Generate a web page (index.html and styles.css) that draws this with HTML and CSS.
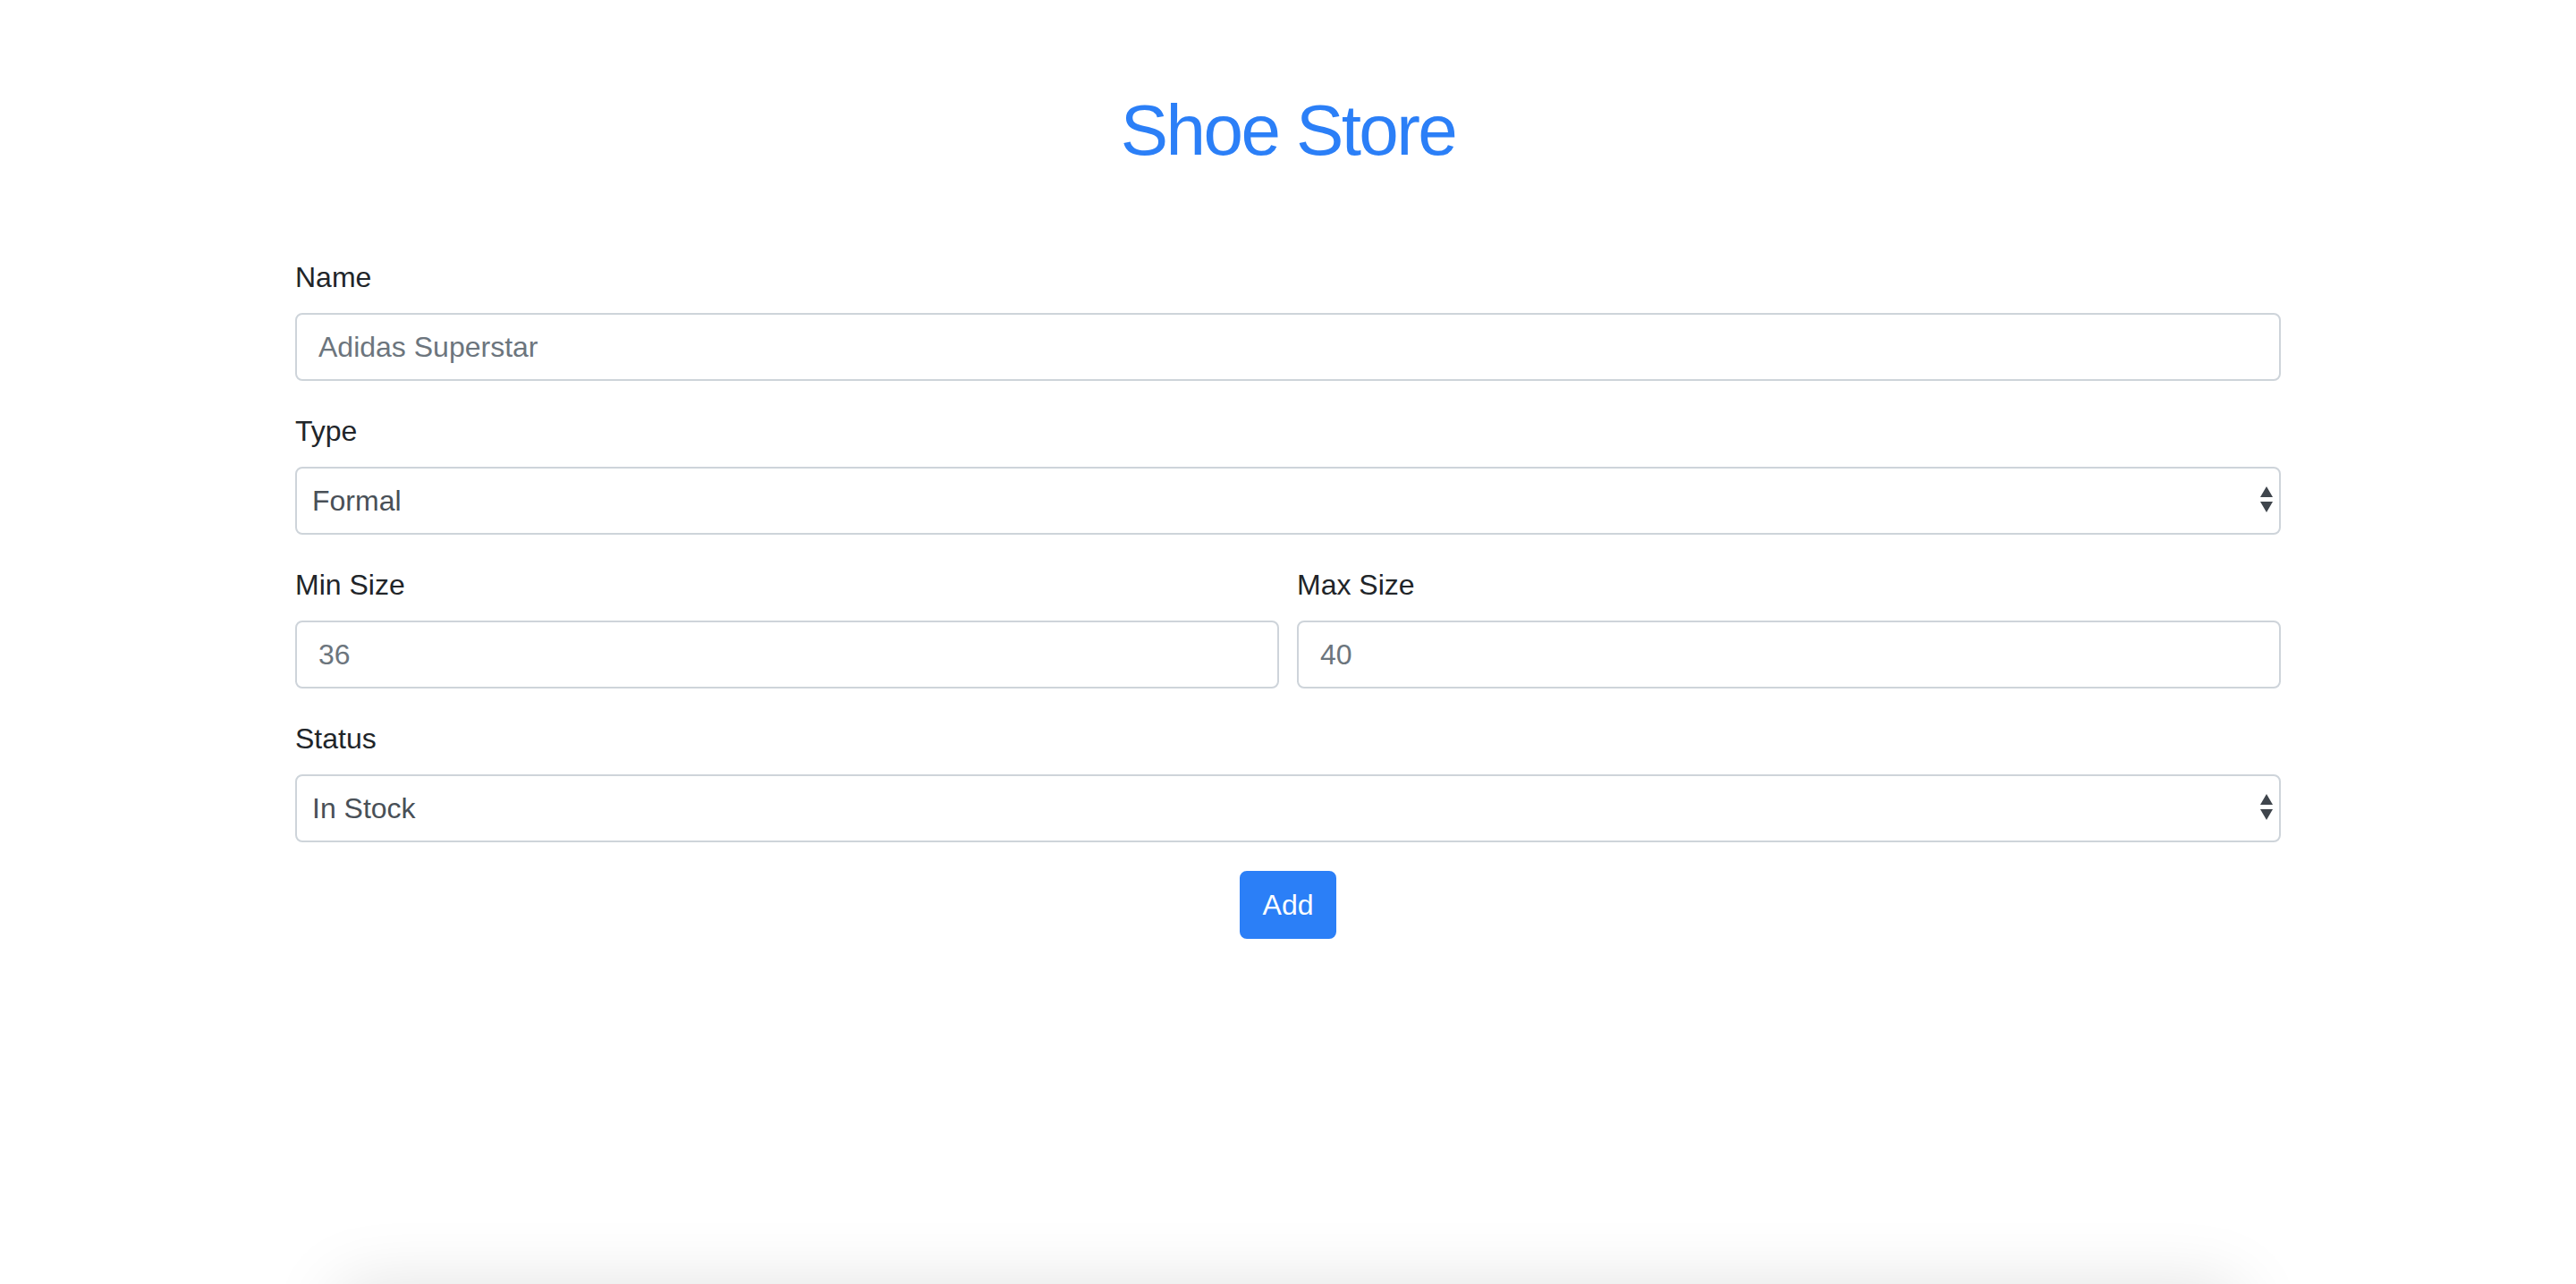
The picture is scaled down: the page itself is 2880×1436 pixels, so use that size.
FILE: index.html
```html
<!DOCTYPE html>
<html lang="en">
<head>
<meta charset="utf-8">
<title>Shoe Store</title>
<link rel="stylesheet" href="styles.css">
</head>
<body>
<div class="container">
  <h1 class="title">Shoe Store</h1>
  <form class="shoe-form">
    <div class="form-group">
      <label class="form-label" for="name">Name</label>
      <input class="form-control" id="name" type="text" placeholder="Adidas Superstar">
    </div>
    <div class="form-group">
      <label class="form-label" for="type">Type</label>
      <div class="select-wrap">
        <select class="form-control form-select" id="type">
          <option>Formal</option>
          <option>Casual</option>
          <option>Sport</option>
        </select>
        <svg class="select-arrows" width="14" height="29" viewBox="0 0 14 29" aria-hidden="true">
          <polygon points="0,12 14,12 7,0" fill="#3f454c"/>
          <polygon points="0,17 14,17 7,29" fill="#3f454c"/>
        </svg>
      </div>
    </div>
    <div class="form-row">
      <div class="form-group col">
        <label class="form-label" for="min">Min Size</label>
        <input class="form-control" id="min" type="text" placeholder="36">
      </div>
      <div class="form-group col">
        <label class="form-label" for="max">Max Size</label>
        <input class="form-control" id="max" type="text" placeholder="40">
      </div>
    </div>
    <div class="form-group">
      <label class="form-label" for="status">Status</label>
      <div class="select-wrap">
        <select class="form-control form-select" id="status">
          <option>In Stock</option>
          <option>Out of Stock</option>
        </select>
        <svg class="select-arrows" width="14" height="29" viewBox="0 0 14 29" aria-hidden="true">
          <polygon points="0,12 14,12 7,0" fill="#3f454c"/>
          <polygon points="0,17 14,17 7,29" fill="#3f454c"/>
        </svg>
      </div>
    </div>
    <div class="actions">
      <button class="btn-primary" type="button">Add</button>
    </div>
  </form>
  <div class="list-peek">
    <div class="list-card"></div>
  </div>
</div>
</body>
</html>
```
FILE: styles.css
```css
html, body {
  margin: 0;
  padding: 0;
  height: 100%;
}
body {
  overflow: hidden;
  background: #fff;
  font-family: "Liberation Sans", Arial, sans-serif;
  font-size: 32px;
  line-height: 48px;
  color: #212529;
}
.container {
  width: 2280px;
  margin: 0 auto;
  padding: 0 30px;
  box-sizing: border-box;
}
.title {
  margin: 98px 0 92px;
  text-align: center;
  font-weight: 400;
  font-size: 80px;
  line-height: 96px;
  letter-spacing: -2.6px;
  color: #2b7ff7;
}
.shoe-form {
  margin: 0;
}
.form-group {
  margin-bottom: 32px;
}
.form-label {
  display: inline-block;
  margin-bottom: 16px;
}
.form-control {
  display: block;
  width: 100%;
  box-sizing: border-box;
  height: 76px;
  margin: 0;
  padding: 12px 24px;
  font-family: inherit;
  font-size: 32px;
  line-height: 48px;
  color: #495057;
  background: #fff;
  border: 2px solid #ced4da;
  border-radius: 8px;
  outline: none;
}
.form-control::placeholder {
  color: #6c757d;
  opacity: 1;
}
.select-wrap {
  position: relative;
}
.form-select {
  -webkit-appearance: none;
  appearance: none;
  padding: 12px 60px 12px 17px;
}
.select-arrows {
  position: absolute;
  right: 9px;
  top: 22px;
  pointer-events: none;
}
.form-row {
  display: flex;
  gap: 20px;
}
.col {
  flex: 1 1 0;
  min-width: 0;
}
.actions {
  display: flex;
  justify-content: center;
}
.btn-primary {
  height: 76px;
  padding: 12px 24px;
  font-family: inherit;
  font-size: 32px;
  line-height: 48px;
  color: #fff;
  background: #2b7ff7;
  border: 2px solid #2b7ff7;
  border-radius: 8px;
}
.list-peek {
  margin: 306px -30px 0;
  height: 80px;
  overflow: hidden;
  padding: 84px 80px 0;
  box-sizing: border-box;
}
.list-card {
  height: 100px;
  background: #fff;
  box-shadow: 0 0 80px rgba(0, 0, 0, 0.13);
}
```
